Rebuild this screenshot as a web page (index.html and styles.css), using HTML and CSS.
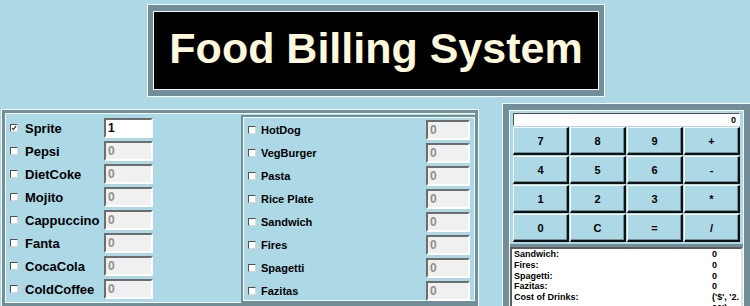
FILE: index.html
```html
<!DOCTYPE html>
<html lang="en">
<head>
  <meta charset="UTF-8">
  <meta name="viewport" content="width=device-width, initial-scale=1.0">
  <title>Food Billing System</title>
  <link rel="stylesheet" href="styles.css">
</head>
<body>
  <div class="banner">
    <h1 class="banner-title">Food Billing System</h1>
  </div>

  <div class="lower">
    <div class="menu">
      <div class="drinks">
        <div class="item">
          <span class="check"><svg viewBox="0 0 6 6" width="6" height="6"><polyline points="1,3 2.4,4.6 5,1.2" fill="none" stroke="#222" stroke-width="1.1"/></svg></span>
          <label>Sprite</label>
          <input class="qty on" value="1">
        </div>
        <div class="item"><span class="check"></span><label>Pepsi</label><input class="qty" value="0" disabled></div>
        <div class="item"><span class="check"></span><label>DietCoke</label><input class="qty" value="0" disabled></div>
        <div class="item"><span class="check"></span><label>Mojito</label><input class="qty" value="0" disabled></div>
        <div class="item"><span class="check"></span><label>Cappuccino</label><input class="qty" value="0" disabled></div>
        <div class="item"><span class="check"></span><label>Fanta</label><input class="qty" value="0" disabled></div>
        <div class="item"><span class="check"></span><label>CocaCola</label><input class="qty" value="0" disabled></div>
        <div class="item"><span class="check"></span><label>ColdCoffee</label><input class="qty" value="0" disabled></div>
      </div>

      <div class="food">
        <div class="item"><span class="check"></span><label>HotDog</label><input class="qty" value="0" disabled></div>
        <div class="item"><span class="check"></span><label>VegBurger</label><input class="qty" value="0" disabled></div>
        <div class="item"><span class="check"></span><label>Pasta</label><input class="qty" value="0" disabled></div>
        <div class="item"><span class="check"></span><label>Rice Plate</label><input class="qty" value="0" disabled></div>
        <div class="item"><span class="check"></span><label>Sandwich</label><input class="qty" value="0" disabled></div>
        <div class="item"><span class="check"></span><label>Fires</label><input class="qty" value="0" disabled></div>
        <div class="item"><span class="check"></span><label>Spagetti</label><input class="qty" value="0" disabled></div>
        <div class="item"><span class="check"></span><label>Fazitas</label><input class="qty" value="0" disabled></div>
      </div>
    </div>

    <div class="calc">
      <input class="display" value="0">
      <div class="keys">
        <button class="key">7</button>
        <button class="key">8</button>
        <button class="key">9</button>
        <button class="key">+</button>
        <button class="key">4</button>
        <button class="key">5</button>
        <button class="key">6</button>
        <button class="key">-</button>
        <button class="key">1</button>
        <button class="key">2</button>
        <button class="key">3</button>
        <button class="key">*</button>
        <button class="key">0</button>
        <button class="key">C</button>
        <button class="key">=</button>
        <button class="key">/</button>
      </div>
      <div class="receipt">
        <span>Sandwich:</span><span>0</span>
        <span>Fires:</span><span>0</span>
        <span>Spagetti:</span><span>0</span>
        <span>Fazitas:</span><span>0</span>
        <span>Cost of Drinks:</span><span class="wrap">('$', '2.00')</span>
      </div>
    </div>
  </div>
</body>
</html>
```

FILE: styles.css
```css
body {
  margin: 0;
  height: 306px;
  overflow: hidden;
  background: #add8e6;
  font-family: "Liberation Sans", Arial, sans-serif;
}

/* title */
.banner {
  width: 458px;
  height: 93px;
  box-sizing: border-box;
  margin: 4px 0 0 147px;
  padding: 6px 5px;
  background: #728e98;
  border: 1px solid #f4fbfd;
}
.banner-title {
  margin: 0;
  height: 79px;
  box-sizing: border-box;
  padding-bottom: 4px;
  display: flex;
  align-items: center;
  justify-content: center;
  border: 1px solid #f4fbfd;
  background: #000;
  color: #fff8dc;
  font-size: 43px;
  font-weight: bold;
}

.lower {
  display: flex;
  align-items: flex-start;
}

/* menu */
.menu {
  display: flex;
  width: 477px;
  height: 196px;
  box-sizing: border-box;
  margin: 13px 0 0 2px;
  border: 3px solid #728e98;
  box-shadow: inset 0 0 0 1px #f4fbfd, 0 0 0 1px #f4fbfd;
}
.drinks {
  width: 236px;
  box-sizing: border-box;
  padding: 5px 0 0 5px;
}
.food {
  flex: 1;
  align-self: stretch;
  margin-top: 2px;
  padding: 3px 5px 0 5px;
  border: 2px solid #728e98;
  border-right: 0;
  box-shadow: inset 1px 1px 0 #f4fbfd, inset 0 -1px 0 #f4fbfd;
}
.item {
  display: flex;
  align-items: center;
  height: 20px;
  margin-bottom: 3px;
}
.check {
  width: 8px;
  height: 8px;
  box-sizing: border-box;
  display: flex;
  border: 1px solid;
  border-color: #505050 #d8d8d8 #d8d8d8 #505050;
  background: #fff;
}
.item label {
  font-weight: bold;
  color: #000;
}
.drinks label {
  width: 79px;
  margin-left: 7px;
  font-size: 13px;
}
.food label {
  flex: 1;
  margin-left: 5px;
  font-size: 11px;
}
.qty {
  width: 49px;
  height: 20px;
  box-sizing: border-box;
  margin: 0;
  padding: 0 0 0 2px;
  border: 2px solid;
  border-color: #6d6d6d #ffffff #ffffff #6d6d6d;
  background: #f0f0f0;
  color: #8f8f8f;
  font-family: inherit;
  font-size: 12px;
  font-weight: bold;
}
.qty.on {
  background: #fff;
  color: #000;
}
.food .qty {
  width: 44px;
}

/* calculator */
.calc {
  width: 247px;
  height: 210px;
  box-sizing: border-box;
  margin: 7px 0 0 25px;
  padding: 3px 4px;
  border: 6px solid #728e98;
  box-shadow: 0 0 0 1px #f4fbfd, inset 0 0 0 1px #f4fbfd;
}
.display {
  display: block;
  width: 100%;
  height: 13px;
  box-sizing: border-box;
  margin: 0;
  padding: 0 3px;
  border: 1px solid;
  border-color: #555 #fff #fff #555;
  background: #fff;
  text-align: right;
  font-family: inherit;
  font-size: 9px;
  font-weight: bold;
}
.keys {
  display: grid;
  grid-template-columns: repeat(4, 56px);
  grid-auto-rows: 28px;
  gap: 1px;
  margin-top: 1px;
}
.key {
  padding: 0;
  border-style: solid;
  border-width: 1px 2px 2px 1px;
  border-color: #fff #111 #111 #fff;
  box-shadow: inset -1px -1px 0 #728e98;
  background: #add8e6;
  color: #000;
  font-family: inherit;
  font-size: 11px;
  font-weight: bold;
}
.receipt {
  display: grid;
  grid-template-columns: 198px 29px;
  align-content: start;
  height: 80px;
  margin: 5px -3px 0;
  padding: 0 0 0 2px;
  border: 2px solid;
  border-color: #5c5c5c #e0e0e0 #e0e0e0 #5c5c5c;
  box-shadow: 0 -3px 0 #728e98;
  background: #fff;
  font-size: 9px;
  font-weight: bold;
  line-height: 10.75px;
}
.wrap {
  word-break: break-all;
}
```
